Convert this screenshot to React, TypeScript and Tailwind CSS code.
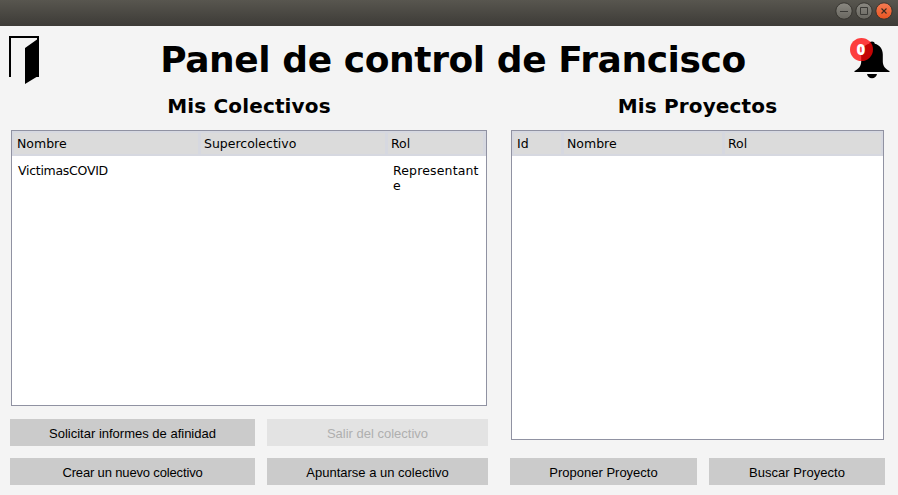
import type { ReactNode } from "react";

const dejavu = "font-['DejaVu_Sans',sans-serif]";

function WindowBar() {
  return (
    <header className="h-[26px] shrink-0 bg-linear-to-b from-[#58564f] to-[#3d3b37] flex justify-end pr-[5px] pt-[2px]">
      <svg width="58" height="18" viewBox="0 0 58 18" fill="none">
        <defs>
          <linearGradient id="grey" x1="0" y1="0" x2="0" y2="1">
            <stop offset="0" stopColor="#8b8982" />
            <stop offset="1" stopColor="#68665f" />
          </linearGradient>
          <linearGradient id="orange" x1="0" y1="0" x2="0" y2="1">
            <stop offset="0" stopColor="#f47c54" />
            <stop offset="1" stopColor="#ea5420" />
          </linearGradient>
        </defs>
        <circle cx="9" cy="9" r="8.200" fill="url(#grey)" stroke="#36342f" />
        <circle cx="29" cy="9" r="8.200" fill="url(#grey)" stroke="#36342f" />
        <circle cx="49" cy="9" r="8.200" fill="url(#orange)" stroke="#36342f" />
        <path d="M5 9.500h8M25.500 5.500h7v7h-7z" stroke="#3b3a36" />
        <path d="M46.500 6.500l5 5M51.500 6.500l-5 5" stroke="#3b2a20" strokeWidth="1.100" />
      </svg>
    </header>
  );
}

function DoorIcon() {
  return (
    <svg width="30" height="48" viewBox="0 0 30 48">
      <path d="M0 0H30V41H27.500L16 48V12L28 3.500V2H2V41H0Z" />
    </svg>
  );
}

function BellIcon() {
  return (
    <svg className="mt-px" width="42" height="44" viewBox="0 0 42 44">
      <path d="M23 4.500c1.500 0 2.600.9 2.800 2.200 5 1.200 8 5.300 8 10.800v7c0 4.500 2.600 7.500 6.700 9.500v1h-35v-1c4.100-2 6.700-5 6.700-9.500v-7c0-5.500 3-9.600 8-10.800C20.400 5.400 21.500 4.500 23 4.500zM18 37h10c-.5 2.700-2.300 4.200-5 4.200s-4.500-1.500-5-4.200z" />
      <circle cx="12.500" cy="12.500" r="11.500" fill="#ff0505" fillOpacity="0.770" />
      <text x="12" y="18" textAnchor="middle" fontFamily="Open Sans, sans-serif" fontSize="15" fontWeight="800" fill="#fff">0</text>
    </svg>
  );
}

function HeaderCell({ width, children }: { width: string; children: ReactNode }) {
  return (
    <div className={`${width} mr-[3px] h-[21px] shrink-0 bg-[#dbdbdb] pl-[3px] leading-[22px]`}>{children}</div>
  );
}

function Button({ width, tracking = "tracking-normal", disabled, children }: { width: string; tracking?: string; disabled?: boolean; children: ReactNode }) {
  return (
    <button
      disabled={disabled}
      className={`${width} ${tracking} h-[27px] bg-[#cbcbcb] text-center font-['Liberation_Sans',sans-serif] text-[13px] leading-[29px] text-black disabled:bg-[#e3e3e3] disabled:text-[#afafaf]`}
    >
      {children}
    </button>
  );
}

export default function App() {
  return (
    <div className={`${dejavu} flex h-[495px] w-[898px] flex-col overflow-hidden bg-[#f4f4f4] text-black`}>
      <WindowBar />
      <div className="flex h-[65px] items-start justify-between pl-[9px] pr-[7px] pt-[10px]">
        <DoorIcon />
        <h1 className="whitespace-nowrap text-[36px] leading-[48px] font-bold tracking-[-0.41px] pl-[18px]">Panel de control de Francisco</h1>
        <BellIcon />
      </div>
      <div className="flex">
        <section className="ml-[10px] w-[478px]">
          <h2 className="h-[39px] text-center text-[20px] leading-[30px] font-bold tracking-[0.15px]">Mis Colectivos</h2>
          <div className="mx-px h-[276px] border border-[#9092a2] bg-white text-[12.5px]">
            <div className="flex h-[25px] bg-[#d6d8e0] pl-[2px] pt-[2px]">
              <HeaderCell width="w-[184px]">Nombre</HeaderCell>
              <HeaderCell width="w-[184px]">Supercolectivo</HeaderCell>
              <HeaderCell width="w-[95px]">Rol</HeaderCell>
            </div>
            <div className="flex pt-[7px] leading-[15px]">
              <span className="w-[374px] pl-[6px] tracking-[-0.28px]">VictimasCOVID</span>
              <span className="w-[95px] break-all pl-[7px] tracking-[0.15px]">Representante</span>
            </div>
          </div>
          <div className="flex flex-wrap gap-x-3 gap-y-3 pt-[13px]">
            <Button width="w-[245px]">Solicitar informes de afinidad</Button>
            <Button width="w-[221px]" disabled>Salir del colectivo</Button>
            <Button width="w-[245px]" tracking="tracking-[-0.15px]">Crear un nuevo colectivo</Button>
            <Button width="w-[221px]">Apuntarse a un colectivo</Button>
          </div>
        </section>
        <section className="ml-[22px] w-[375px]">
          <h2 className="h-[39px] text-center text-[20px] leading-[30px] font-bold tracking-[0.15px]">Mis Proyectos</h2>
          <div className="mx-px h-[310px] border border-[#9092a2] bg-white text-[12.5px]">
            <div className="flex h-[25px] bg-[#d6d8e0] pl-[2px] pt-[2px]">
              <HeaderCell width="w-[47px]">Id</HeaderCell>
              <HeaderCell width="w-[158px]">Nombre</HeaderCell>
              <HeaderCell width="w-[156px]">Rol</HeaderCell>
            </div>
          </div>
          <div className="flex gap-3 pt-[18px]">
            <Button width="w-[187px]">Proponer Proyecto</Button>
            <Button width="w-[176px]" tracking="tracking-[0.05px]">Buscar Proyecto</Button>
          </div>
        </section>
      </div>
    </div>
  );
}
